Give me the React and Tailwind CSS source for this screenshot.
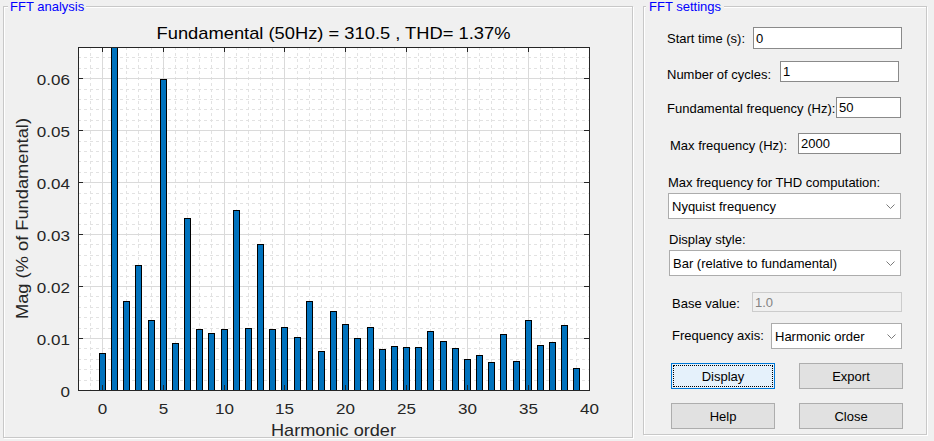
import React from "react";

const VALS = [
  0.00707, 1, 0.0171, 0.0241, 0.01344, 0.0599, 0.009, 0.0331, 0.0117, 0.01093,
  0.0117, 0.03466, 0.0119, 0.0281, 0.0117, 0.0121, 0.01016, 0.0171, 0.00746, 0.01518,
  0.01267, 0.00997, 0.01209, 0.00785, 0.00842, 0.00823, 0.00823, 0.01132, 0.00939, 0.00804,
  0.00592, 0.00669, 0.00534, 0.01074, 0.00553, 0.01344, 0.00862, 0.0092, 0.01248, 0.00418,
];

const col = (u) => Math.floor(78 + ((u + 2) * 511) / 42);
const row = (v) => Math.round(390 - (v * 343) / 0.066);
const SVGFONT = "'Liberation Sans', Arial, Helvetica, sans-serif";

function Chart() {
  const minorV = [];
  for (let u = -1; u < 40; u++) if (u % 5 !== 0) minorV.push(col(u) + 0.5);
  const majorV = [];
  for (let u = 0; u < 40; u += 5) majorV.push(col(u) + 0.5);
  const minorH = [];
  for (let k = 1; k <= 32; k++) if (k % 5 !== 0) minorH.push(row(k * 0.002) + 0.5);
  const majorH = [];
  for (let k = 1; k <= 6; k++) majorH.push(row(k * 0.01) + 0.5);
  const xt = [0, 5, 10, 15, 20, 25, 30, 35, 40];
  const yt = [0, 1, 2, 3, 4, 5, 6];

  return (
    <svg width="628" height="430" viewBox="4 7 628 430" className="block overflow-visible" fontFamily={SVGFONT}>
      <rect x="78" y="47" width="512" height="344" fill="#ffffff" />
      {minorV.map((x, i) => (
        <line key={"mv" + i} x1={x} x2={x} y1="47" y2="390" stroke="#e2e2e2" strokeDasharray="3 3" />
      ))}
      {minorH.map((y, i) => (
        <line key={"mh" + i} x1="78" x2="589" y1={y} y2={y} stroke="#e2e2e2" strokeDasharray="3 3" />
      ))}
      {majorV.map((x, i) => (
        <line key={"Mv" + i} x1={x} x2={x} y1="47" y2="390" stroke="#dadada" />
      ))}
      {majorH.map((y, i) => (
        <line key={"Mh" + i} x1="78" x2="589" y1={y} y2={y} stroke="#dadada" />
      ))}
      {VALS.map((v, u) => {
        const c = col(u);
        const top = u === 1 ? 47 : row(v);
        return (
          <rect
            key={"b" + u}
            x={c - 2.5}
            y={top + 0.5}
            width="6"
            height={390 - top}
            fill="#0072BD"
            stroke="#000000"
            strokeWidth="1"
          />
        );
      })}
      <rect x="78.5" y="47.5" width="511" height="343" fill="none" stroke="#262626" />
      {xt.map((u) => {
        const x = col(u) + 0.5;
        return (
          <g key={"xt" + u}>
            <line x1={x} x2={x} y1="390" y2="385" stroke="#262626" />
            <line x1={x} x2={x} y1="47" y2="52" stroke="#262626" />
          </g>
        );
      })}
      {yt.map((k) => {
        const y = row(k * 0.01) + 0.5;
        return (
          <g key={"yt" + k}>
            <line x1="78" x2="83" y1={y} y2={y} stroke="#262626" />
            <line x1="589" x2="584" y1={y} y2={y} stroke="#262626" />
          </g>
        );
      })}
      {xt.map((u) => (
        <g key={"xl" + u} transform={`translate(${col(u) + 0.5},414) scale(1.1,1)`}>
          <text textAnchor="middle" fontSize="15.5" fill="#262626">
            {u}
          </text>
        </g>
      ))}
      {yt.map((k) => (
        <g key={"yl" + k} transform={`translate(70,${row(k * 0.01) + 7}) scale(1.1,1)`}>
          <text textAnchor="end" fontSize="15.5" fill="#262626">
            {k === 0 ? "0" : `0.0${k}`}
          </text>
        </g>
      ))}
      <text
        x="333.5"
        y="39.3"
        textAnchor="middle"
        fontSize="17"
        fill="#000000"
        textLength="354"
        lengthAdjust="spacingAndGlyphs"
      >
        Fundamental (50Hz) = 310.5 , THD= 1.37%
      </text>
      <text
        x="333.5"
        y="436"
        textAnchor="middle"
        fontSize="17"
        fill="#262626"
        textLength="125"
        lengthAdjust="spacingAndGlyphs"
      >
        Harmonic order
      </text>
      <g transform="translate(28,218.5) rotate(-90)">
        <text textAnchor="middle" fontSize="17" fill="#262626" textLength="201" lengthAdjust="spacingAndGlyphs">
          Mag (% of Fundamental)
        </text>
      </g>
    </svg>
  );
}

function Chevron() {
  return (
    <svg width="9" height="5" viewBox="0 0 9 5" className="block shrink-0">
      <path d="M0.5 0.5 L4.5 4.5 L8.5 0.5" stroke="#7a7a7a" strokeWidth="1" fill="none" />
    </svg>
  );
}

function Select({ text, className }) {
  return (
    <div
      className={
        "h-[26px] border border-[#acacac] bg-white flex items-center justify-between pl-[3px] pr-[5px] " +
        className
      }
    >
      <span className="leading-[15px] whitespace-nowrap">{text}</span>
      <Chevron />
    </div>
  );
}

function Edit({ value, className }) {
  return (
    <div className={"border border-[#8a8a8a] bg-white flex items-center pl-[2px] leading-[15px] " + className}>
      {value}
    </div>
  );
}

function Btn({ children, focused }) {
  if (focused) {
    return (
      <button className="w-[104px] h-[26px] border border-[#0078d7] bg-[#e5f1fb] p-[1px] text-[13px] text-black">
        <span className="flex w-full h-full items-center justify-center border border-dotted border-black leading-[15px]">
          {children}
        </span>
      </button>
    );
  }
  return (
    <button className="w-[104px] h-[26px] border border-[#adadad] bg-[#e1e1e1] flex items-center justify-center text-[13px] leading-[15px] text-black">
      {children}
    </button>
  );
}

export default function App() {
  return (
    <div className="w-[934px] h-[441px] bg-[#f0f0f0] flex items-start pl-[3px] pt-[6px] gap-[10px] overflow-hidden font-['Liberation_Sans',Arial,sans-serif] text-[13px] text-black">
      <div className="relative w-[630px] h-[432px] border border-[#c8c8c8] shadow-[inset_1px_1px_0_#ffffff,1px_1px_0_#ffffff]">
        <span className="absolute left-[4px] top-[-8px] px-[2px] bg-[#f0f0f0] text-[#0000ff] text-[13px] leading-[15px]">
          FFT analysis
        </span>
        <Chart />
      </div>

      <div className="relative w-[284px] h-[429px] border border-[#c8c8c8] shadow-[inset_1px_1px_0_#ffffff,1px_1px_0_#ffffff] flex flex-col items-start">
        <span className="absolute left-[2px] top-[-8px] px-[3px] bg-[#f0f0f0] text-[#0000ff] text-[13px] leading-[15px]">
          FFT settings
        </span>

        <div className="flex items-start ml-[23px] mt-[20px] h-[22px]">
          <div className="w-[86px] mt-[4px] leading-[15px] whitespace-nowrap">Start time (s):</div>
          <Edit value="0" className="w-[149px] h-[22px]" />
        </div>

        <div className="flex items-start ml-[23px] mt-[12px] h-[21px]">
          <div className="w-[113px] mt-[6px] leading-[15px] whitespace-nowrap">Number of cycles:</div>
          <Edit value="1" className="w-[119px] h-[21px]" />
        </div>

        <div className="flex items-start ml-[23px] mt-[15px] h-[21px]">
          <div className="w-[169px] mt-[4px] leading-[15px] whitespace-nowrap">Fundamental frequency (Hz):</div>
          <Edit value="50" className="w-[65px] h-[21px]" />
        </div>

        <div className="flex items-start ml-[26px] mt-[15px] h-[21px]">
          <div className="w-[128px] mt-[5px] leading-[15px] whitespace-nowrap">Max frequency (Hz):</div>
          <Edit value="2000" className="w-[103px] h-[21px]" />
        </div>

        <div className="ml-[24px] mt-[21px] leading-[15px] whitespace-nowrap">Max frequency for THD computation:</div>
        <Select text="Nyquist frequency" className="ml-[24px] mt-[3px] w-[233px]" />

        <div className="ml-[25px] mt-[13px] leading-[15px] whitespace-nowrap">Display style:</div>
        <Select text="Bar (relative to fundamental)" className="ml-[25px] mt-[3px] w-[232px]" />

        <div className="flex items-start ml-[28px] mt-[16px] h-[20px]">
          <div className="w-[80px] mt-[4px] leading-[15px] whitespace-nowrap">Base value:</div>
          <div className="w-[150px] h-[20px] border border-[#cccccc] bg-[#f0f0f0] flex items-center pl-[2px] leading-[15px] text-[#838383]">
            1.0
          </div>
        </div>

        <div className="flex items-start ml-[28px] mt-[11px] h-[26px]">
          <div className="w-[99px] mt-[5px] leading-[15px] whitespace-nowrap">Frequency axis:</div>
          <Select text="Harmonic order" className="w-[131px]" />
        </div>

        <div className="flex ml-[27px] mt-[14px] gap-[24px]">
          <Btn focused>Display</Btn>
          <Btn>Export</Btn>
        </div>

        <div className="flex ml-[27px] mt-[14px] gap-[24px]">
          <Btn>Help</Btn>
          <Btn>Close</Btn>
        </div>
      </div>
    </div>
  );
}
